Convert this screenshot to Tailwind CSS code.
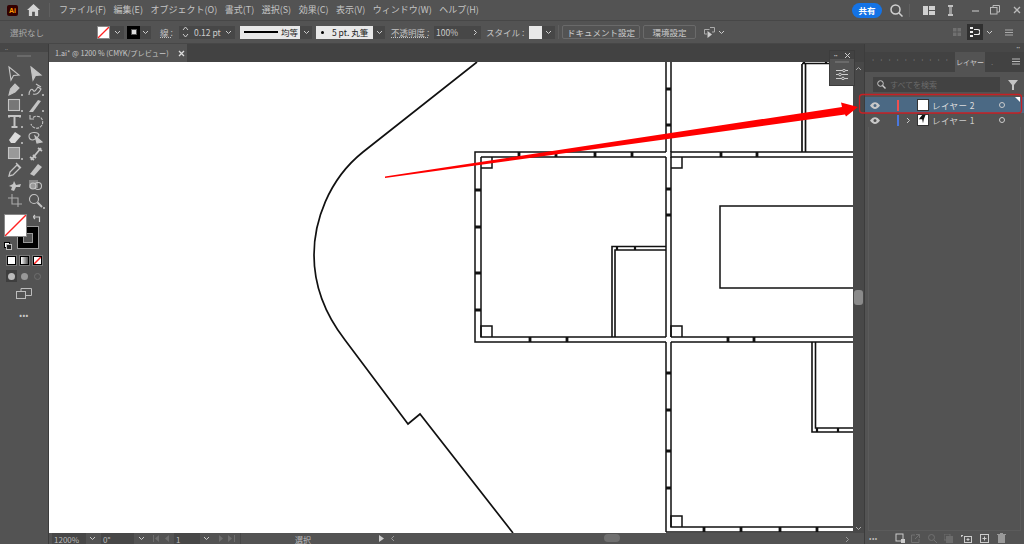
<!DOCTYPE html>
<html lang="ja"><head><meta charset="utf-8"><title>Illustrator</title>
<script src="https://cdn.jsdelivr.net/npm/@tailwindcss/browser@4"></script></head>
<body class="m-0 overflow-hidden">
<div class="w-[1024px] h-[544px] flex flex-col bg-[#535353] text-[#c4c4c4] overflow-hidden relative font-['Noto_Sans_CJK_JP','Noto_Sans',sans-serif]">

<!-- menu -->
<div class="h-[20px] flex items-center shrink-0 text-[9px]">
 <div class="w-[11px] h-[11px] ml-[7px] rounded-[2px] bg-[#330000] text-[#ff9a00] text-[7px] leading-[11px] text-center font-bold font-['Liberation_Sans']">Ai</div>
 <svg class="ml-[9px]" width="13" height="12" viewBox="0 0 14 13"><path d="M7 0L14 6.500H12V13H8.500V8.500H5.500V13H2V6.500H0Z" fill="#d4d4d4"/></svg>
 <div class="w-px h-[14px] bg-[#5f5f5f] ml-[9px]"></div>
 <div class="flex ml-[9px] gap-[7.500px] whitespace-nowrap">
  <span>ファイル(F)</span><span>編集(E)</span><span>オブジェクト(O)</span><span>書式(T)</span><span>選択(S)</span><span>効果(C)</span><span>表示(V)</span><span>ウィンドウ(W)</span><span>ヘルプ(H)</span>
 </div>
 <div class="flex-1"></div>
 <div class="w-[30px] h-[15px] rounded-full bg-[#1473e6] text-white text-[8.500px] leading-[15px] text-center font-bold mr-[8px]">共有</div>
 <svg class="mr-[6px]" width="13" height="13" viewBox="0 0 13 13" fill="none" stroke="#d0d0d0" stroke-width="1.500"><circle cx="5.500" cy="5.500" r="4.500"/><path d="M9 9l3.500 3.500"/></svg>
 <div class="w-px h-[13px] bg-[#5f5f5f] mr-[13px]"></div>
 <svg class="mr-[13px]" width="12" height="9" viewBox="0 0 12 9"><rect width="5" height="9" fill="#d0d0d0"/><rect x="6" width="6" height="4" fill="#d0d0d0"/><rect x="6" y="5" width="6" height="4" fill="#d0d0d0"/></svg>
 <svg class="mr-[18px]" width="5" height="11" viewBox="0 0 5 11"><rect width="5" height="2" fill="#c0c0c0"/><rect x="1" y="2" width="3" height="7" fill="#999"/><rect y="9" width="5" height="2" fill="#c0c0c0"/></svg>
 <svg class="mr-[10px]" width="9" height="9" viewBox="0 0 9 9"><path d="M1 5h7" stroke="#bbb" stroke-width="1.200"/></svg>
 <svg class="mr-[13px]" width="10" height="10" viewBox="0 0 10 10" fill="none" stroke="#bbb"><rect x="0.500" y="2.500" width="6.500" height="6.500"/><path d="M3 2.500V0.500H9.500V7H7"/></svg>
 <svg class="mr-[3px]" width="8" height="8" viewBox="0 0 8 8"><path d="M1 1l6 6M7 1l-6 6" stroke="#bbb" stroke-width="1.300"/></svg>
</div>

<!-- control bar -->
<div class="h-[24px] shrink-0 border-t border-b border-[#474747] flex items-center text-[8.500px] whitespace-nowrap">
 <span class="ml-[10px] w-[87px] text-[#aaa]">選択なし</span>
 <svg width="13" height="13" class="bg-white border border-[#888]" viewBox="0 0 13 13"><path d="M0 13L13 0" stroke="#f22" stroke-width="1.500"/></svg>
 <div class="w-[14px] h-[13px] bg-[#474747] flex items-center justify-center"><svg width="7" height="5" viewBox="0 0 7 5" fill="none" stroke="#ccc"><path d="M1 1l2.500 2.500L6 1"/></svg></div>
 <div class="ml-[3px] w-[13px] h-[13px] bg-black flex items-center justify-center"><div class="w-[6px] h-[6px] bg-[#ddd] border border-[#555]"></div></div>
 <div class="w-[11px] h-[13px] bg-[#474747] flex items-center justify-center"><svg width="7" height="5" viewBox="0 0 7 5" fill="none" stroke="#ccc"><path d="M1 1l2.500 2.500L6 1"/></svg></div>
 <span class="ml-[9px] w-[15px] underline decoration-dotted">線 :</span>
 <div class="ml-[4px] h-[13px] w-[56px] bg-[#474747] flex items-center text-[#ccc]">
  <svg class="ml-[3px]" width="7" height="12" viewBox="0 0 7 12" fill="none" stroke="#ccc"><path d="M1 4l2.500-3L6 4M1 8l2.500 3L6 8"/></svg>
  <span class="ml-[5px]">0.12 pt</span><svg class="ml-auto mr-[3px]" width="7" height="5" viewBox="0 0 7 5" fill="none" stroke="#ccc"><path d="M1 1l2.500 2.500L6 1"/></svg>
 </div>
 <div class="ml-[5px] h-[13px] w-[60px] bg-[#e8e8e8] flex items-center text-[#222]"><div class="ml-[4px] w-[34px] h-[2px] bg-black"></div><span class="ml-[3px]">均等</span></div>
 <div class="w-[12px] h-[13px] bg-[#474747] flex items-center justify-center"><svg width="7" height="5" viewBox="0 0 7 5" fill="none" stroke="#ccc"><path d="M1 1l2.500 2.500L6 1"/></svg></div>
 <div class="ml-[4px] h-[13px] w-[57px] bg-[#e8e8e8] flex items-center text-[#222]"><div class="ml-[5px] w-[3px] h-[3px] rounded-full bg-black"></div><span class="ml-[8px]">5 pt. 丸筆</span></div>
 <div class="w-[12px] h-[13px] bg-[#474747] flex items-center justify-center"><svg width="7" height="5" viewBox="0 0 7 5" fill="none" stroke="#ccc"><path d="M1 1l2.500 2.500L6 1"/></svg></div>
 <span class="ml-[6px] w-[38px] underline decoration-dotted">不透明度 :</span>
 <div class="ml-[5px] h-[13px] w-[36px] bg-[#474747] pl-[2px] leading-[13px] text-[#ccc]">100%</div>
 <div class="w-[11px] h-[13px] bg-[#474747] flex items-center justify-center"><svg width="5" height="7" viewBox="0 0 5 7" fill="none" stroke="#ccc"><path d="M1 1l2.500 2.500L1 6"/></svg></div>
 <span class="ml-[5px] w-[39px]">スタイル :</span>
 <div class="ml-[4px] w-[13px] h-[13px] bg-[#e8e8e8]"></div>
 <div class="w-[13px] h-[13px] bg-[#474747] flex items-center justify-center"><svg width="7" height="5" viewBox="0 0 7 5" fill="none" stroke="#ccc"><path d="M1 1l2.500 2.500L6 1"/></svg></div>
 <div class="ml-[3px] w-px h-[14px] bg-[#5f5f5f]"></div>
 <div class="ml-[3px] w-[78px] h-[14px] border border-[#6a6a6a] rounded-[2px] text-center leading-[12px] text-[#ccc]">ドキュメント設定</div>
 <div class="ml-[3px] w-[53px] h-[14px] border border-[#6a6a6a] rounded-[2px] text-center leading-[12px] text-[#ccc]">環境設定</div>
 <svg class="ml-[8px]" width="11" height="11" viewBox="0 0 11 11" fill="none" stroke="#aaa"><path d="M5.500 2.500H0.500V7H3M6 0.500H10.500V5H8"/><path d="M3.500 4V11L8 7.500Z" fill="#ccc" stroke="none"/></svg>
 <svg class="ml-[3px]" width="7" height="5" viewBox="0 0 7 5" fill="none" stroke="#ccc"><path d="M1 1l2.500 2.500L6 1"/></svg>
 <div class="flex-1"></div>
 <svg width="8" height="8" viewBox="0 0 8 8" fill="#707070"><rect width="3.500" height="3.500"/><rect x="4.500" width="3.500" height="3.500"/><rect y="4.500" width="3.500" height="3.500"/><rect x="4.500" y="4.500" width="3.500" height="3.500"/></svg>
 <div class="ml-[6px] w-[16px] h-[16px] bg-[#303030] flex items-center justify-center"><svg width="10" height="10" viewBox="0 0 10 10" fill="#eee"><rect width="3" height="2"/><rect y="4" width="3" height="2"/><rect y="8" width="3" height="2"/><path d="M4 2.500h3.500a2 2 0 0 1 0 5H4" fill="none" stroke="#eee" stroke-width="1.200"/></svg></div>
 <svg class="ml-[3px]" width="7" height="5" viewBox="0 0 7 5" fill="none" stroke="#ccc"><path d="M1 1l2.500 2.500L6 1"/></svg>
 <svg class="ml-[12px] mr-[11px]" width="8" height="7" viewBox="0 0 8 7" stroke="#aaa"><path d="M0 1h8M0 3.500h8M0 6h8"/></svg>
</div>

<!-- body -->
<div class="flex-1 flex min-h-0">
 <!-- tools -->
 <div class="w-[49px] shrink-0 border-r border-[#3c3c3c] flex flex-col items-center">
  <div class="h-[8px] w-full bg-[#474747] flex items-center pl-[5px] text-[5px] text-[#aaa]">..</div>
  <div class="w-[28px] h-[8px] flex items-center justify-center"><div class="w-[14px] h-[2px] bg-[#6a6a6a]"></div></div>
  <svg class="mt-[5px]" width="48" height="149" viewBox="0 0 48 149" fill="none" stroke="#c4c4c4" stroke-width="1.100">
   <path d="M9 2L19 10L13.500 10.500L11 15Z"/><path d="M31 2L41 10L35.500 10.500L33 15Z" fill="#c4c4c4"/>
   <g transform="translate(0 16)"><path d="M9 14L10.500 8L15 3L19 7L15 11Z" fill="#c4c4c4"/><path d="M29 14C29 9 32 7 33 9C34 12 36 9 38 6L41 8C39 12 36 14 33 13" /><path d="M36 3L41 6"/><rect x="21" y="13" width="2" height="2" fill="#aaa" stroke="none"/><rect x="42" y="13" width="2" height="2" fill="#aaa" stroke="none"/></g>
   <g transform="translate(0 32)"><rect x="8.500" y="2.500" width="11" height="11" fill="#777"/><path d="M29 15L38 3L41 4L33 15Z" fill="#c4c4c4" stroke="none"/><rect x="21" y="13" width="2" height="2" fill="#aaa" stroke="none"/><rect x="42" y="13" width="2" height="2" fill="#aaa" stroke="none"/></g>
   <g transform="translate(0 48)"><path d="M9 4.500V3H20V4.500M14.500 3V14M11.500 14H17.500" stroke-width="2"/><path d="M33 4.500A6 6 0 1 1 31 11" stroke-dasharray="3 1"/><path d="M30 2V6H34"/><rect x="21" y="13" width="2" height="2" fill="#aaa" stroke="none"/></g>
   <g transform="translate(0 64)"><path d="M9 11L15 3L21 7L15 14H11Z" fill="#dcdcdc" stroke="none"/><path d="M29 7C29 3 38 2 39 6L37 9L33 11C30 11 29 9 29 7Z"/><path d="M35 7L42 13L37 14Z" fill="#c4c4c4"/><rect x="21" y="13" width="2" height="2" fill="#aaa" stroke="none"/></g>
   <g transform="translate(0 80)"><rect x="8.500" y="2.500" width="11" height="11" fill="#999"/><path d="M31 15L41 3M30 12L34 15M38 3L42 6M33 10L36 13" stroke-width="1.800"/><rect x="21" y="13" width="2" height="2" fill="#aaa" stroke="none"/></g>
   <g transform="translate(0 96)"><path d="M9 15L10 11L17 4L20 7L13 14ZM16 2L21 7" stroke-width="1.300"/><path d="M30 13L38 3L42 6L34 15Z" fill="#c4c4c4" stroke="none"/></g>
   <g transform="translate(0 112)"><path d="M9 9L13 7L14 4L16 8L21 7L20 10L16 10L14 14L11 13L12 10Z" fill="#c4c4c4" stroke="none"/><rect x="29" y="3" width="9" height="8" fill="#888" stroke="none"/><circle cx="38" cy="9" r="3.500"/><circle cx="33" cy="9" r="3" fill="#999"/></g>
   <g transform="translate(0 128)"><path d="M8 5H18V14M12 1V11H22" stroke="#aaa"/><circle cx="34" cy="6" r="4.500"/><path d="M37.500 9.500L42 14" stroke-width="2"/><rect x="43" y="14" width="2" height="2" fill="#aaa" stroke="none"/></g>
  </svg>
  <!-- fill/stroke -->
  <div class="relative w-[40px] h-[40px]">
   <div class="absolute left-[13px] top-[12px] w-[22px] h-[23px] bg-black border border-[#999] flex items-center justify-center"><div class="w-[10px] h-[10px] bg-[#535353] border border-[#999]"></div></div>
   <svg class="absolute left-[0px] top-[0px] bg-white border border-[#888]" width="23" height="23" viewBox="0 0 23 23"><path d="M0 23L23 0" stroke="#f22" stroke-width="1.500"/></svg>
   <svg class="absolute left-[29px] top-[0px]" width="9" height="9" viewBox="0 0 9 9" fill="none" stroke="#ccc" stroke-width="1.200"><path d="M1 3H6.500V8M0 3l2-2M0 3l2 2"/></svg>
   <div class="absolute left-[0px] top-[28px] w-[6px] h-[6px] bg-white border border-black"></div><div class="absolute left-[2px] top-[30px] w-[6px] h-[6px] bg-[#222] border border-[#bbb]"></div>
  </div>
  <div class="flex gap-[4px] mt-[2px]">
   <div class="w-[9px] h-[9px] bg-white border border-black outline outline-[#777]"></div>
   <div class="w-[9px] h-[9px] bg-gradient-to-r from-white to-[#555] border border-black outline outline-[#777]"></div>
   <svg class="border border-black outline outline-[#777] bg-white" width="9" height="9" viewBox="0 0 9 9"><path d="M0 9L9 0" stroke="#f22" stroke-width="2"/></svg>
  </div>
  <div class="flex gap-[2px] mt-[5px]">
   <div class="w-[11px] h-[12px] bg-[#3e3e3e] flex items-center justify-center"><div class="w-[7px] h-[7px] rounded-full bg-[#bbb]"></div></div>
   <div class="w-[11px] h-[12px] flex items-center justify-center"><div class="w-[7px] h-[7px] rounded-full bg-[#999]"></div></div>
   <div class="w-[11px] h-[12px] flex items-center justify-center"><div class="w-[7px] h-[7px] rounded-full border border-[#6e6e6e]"></div></div>
  </div>
  <svg class="mt-[6px]" width="16" height="11" viewBox="0 0 16 11" fill="none" stroke="#bdbdbd"><rect x="0.500" y="3.500" width="9" height="7"/><path d="M5 3.500V0.500H15.500V7.500H9.500"/></svg>
  <div class="mt-[11px] text-[#ccc] text-[8px] leading-[10px] tracking-[0.5px]">•••</div>
 </div>

 <!-- doc -->
 <div class="w-[815px] shrink-0 flex flex-col relative">
  <div class="h-[18px] bg-[#424242] flex shrink-0">
   <div class="w-[138px] h-[18px] bg-[#535353] flex items-center pl-[6px] text-[7.200px] text-[#c8c8c8] whitespace-nowrap">1.ai* @ 1200 % (CMYK/プレビュー)<svg class="ml-[9px]" width="7" height="7" viewBox="0 0 7 7"><path d="M1 1l5 5M6 1l-5 5" stroke="#ddd" stroke-width="1.300"/></svg></div>
  </div>
  <div class="flex-1 flex min-h-0">
   <!-- artboard -->
   <svg class="bg-white shrink-0" width="804" height="471" viewBox="49 62 804 471" fill="none" stroke="#111" stroke-width="1.500">
    <path d="M477 62L363 152C328 180 314 222 314 255C314 290 328 318 345 340L408 424L420 414L513 533" stroke-width="1.700"/>
    <path d="M666 62V152M671 62V152"/>
    <path d="M802 64V152M805.500 64V152" stroke-width="1.700"/>
    <path d="M802 63.500H830" />
    <path d="M853 152H671V157H853"/>
    <path d="M666 152H475V342H666M481 157H666M481 157V337H666"/>
    <path d="M666 157V337M671 157V337M671 337H853M671 342H853"/>
    <path d="M666 342V532M671 342V527H853M666 532H853"/>
    <path d="M481 168H492V157M671 168H682V157M481 337V326H492V337M671 337V326H682V337M671 527V516H682V527"/>
    <rect x="720" y="206" width="140" height="82"/>
    <g stroke-width="1.600"><path d="M612 337V246.500H666M615 337V250H666"/><path d="M812 342V432H853M815.500 342V428H853"/></g>
    <g stroke-width="2.800">
     <path d="M519 152V157M556 152V157M595 152V157M632 152V157"/>
     <path d="M475 190H481M475 227H481M475 273H481M475 310H481"/>
     <path d="M530 337V342M567 337V342M728 337V342M754 337V342"/>
     <path d="M666 89H671M666 125H671M666 189H671M666 215H671M666 373H671M666 410H671M666 451H671M666 488H671"/>
     <path d="M704 527V532M741 527V532M780 527V532M817 527V532"/>
     <path d="M721 152V157M757 152V157"/>
    </g>
    <g stroke-width="2.200"><path d="M817 428V432M838 428V432M617 246.500V250M635 246.500V250M804 62V64M826 62V64"/></g>
   </svg>
   <!-- scrollbar -->
   <div class="w-[11px] shrink-0 bg-[#484848] relative">
    <svg class="absolute left-[2px] top-[4px]" width="7" height="5" viewBox="0 0 7 5" fill="none" stroke="#aaa"><path d="M1 4l2.500-2.500L6 4"/></svg>
    <div class="absolute left-[1px] top-[228px] w-[9px] h-[15px] rounded-[3px] bg-[#8a8a8a]"></div>
    <svg class="absolute left-[2px] top-[464px]" width="7" height="5" viewBox="0 0 7 5" fill="none" stroke="#aaa"><path d="M1 1l2.500 2.500L6 1"/></svg>
   </div>
  </div>
  <!-- status -->
  <div class="h-[11px] shrink-0 flex items-start text-[8px] leading-[14px] text-[#bbb] overflow-hidden whitespace-nowrap bg-[#535353] pl-[3px]">
   <div class="w-[34px] h-[11px] bg-[#474747] pl-[2px]">1200%</div><div class="w-[11px] h-[11px] ml-px flex justify-center items-center"><svg width="7" height="5" viewBox="0 0 7 5" fill="none" stroke="#ccc"><path d="M1 1l2.500 2.500L6 1"/></svg></div>
   <div class="ml-[3px] w-[33px] h-[11px] bg-[#474747] pl-[2px]">0°</div><div class="w-[14px] h-[11px] flex justify-center items-center"><svg width="7" height="5" viewBox="0 0 7 5" fill="none" stroke="#ccc"><path d="M1 1l2.500 2.500L6 1"/></svg></div>
   <svg class="ml-[5px] mt-[2px]" width="18" height="7" viewBox="0 0 18 7" fill="#6e6e6e"><rect width="1" height="7"/><path d="M6 0v7L2 3.500ZM16 0v7L12 3.500Z"/></svg>
   <div class="ml-[3px] w-[26px] h-[11px] bg-[#474747] pl-[2px]">1</div><div class="w-[12px] h-[11px] flex justify-center items-center"><svg width="7" height="5" viewBox="0 0 7 5" fill="none" stroke="#ccc"><path d="M1 1l2.500 2.500L6 1"/></svg></div>
   <svg class="ml-[7px] mt-[2px]" width="18" height="7" viewBox="0 0 18 7" fill="#6e6e6e"><path d="M0 0v7L4 3.500ZM9 0v7L13 3.500Z"/><rect x="15" width="1" height="7"/></svg>
   <div class="ml-[3px] w-[133px] text-center text-[8px] border-l border-[#474747] pr-[8px]">選択</div>
   <svg class="ml-[6px] mt-[2px]" width="5" height="7" viewBox="0 0 5 7" fill="#ccc"><path d="M0 0v7L5 3.500Z"/></svg>
   <svg class="ml-[6px] mt-[2px]" width="5" height="7" viewBox="0 0 5 7" fill="none" stroke="#999"><path d="M4 1L1.500 3.500L4 6"/></svg>
   <div class="absolute left-[555px] bottom-[2px] w-[16px] h-[8px] rounded bg-[#707070]"></div>
   <svg class="absolute right-[14px] bottom-[1px]" width="5" height="7" viewBox="0 0 5 7" fill="none" stroke="#999"><path d="M1 1l2.500 2.500L1 6"/></svg>
  </div>
 </div>

 <!-- right panels -->
 <div class="w-[160px] shrink-0 border-l border-[#3c3c3c] flex flex-col">
  <div class="h-[8px] bg-[#474747] shrink-0 flex justify-end pr-[4px] text-[5px] leading-[6px] text-[#aaa]">••</div>
  <div class="h-[20px] bg-[#424242] shrink-0 flex items-stretch">
   <div class="w-[90px] flex items-center justify-around px-[4px] text-[#7a7a7a] text-[7px]"><span>ˈ</span><span>ˈ</span><span>ˈ</span><span>ˈ</span><span>ˈ</span><span>ˈ</span><span>ˈ</span><span>ˈ</span><span>ˈ</span><span>ˈ</span></div>
   <div class="w-[30px] bg-[#535353] text-[7px] leading-[20px] text-center text-[#ccc]">レイヤー</div>
   <span class="ml-[6px] text-[#777] text-[8px] leading-[20px]">.</span>
   <svg class="ml-auto mr-[4px] mt-[6px]" width="8" height="7" viewBox="0 0 8 7" stroke="#bbb"><path d="M0 1h8M0 3.500h8M0 6h8"/></svg>
  </div>
  <div class="flex items-center mt-[5px] ml-[8px] shrink-0">
   <div class="w-[127px] h-[15px] bg-[#424242] flex items-center pl-[4px] text-[8px] text-[#6a6a6a]"><svg width="9" height="9" viewBox="0 0 9 9" fill="none" stroke="#ccc"><circle cx="3.500" cy="3.500" r="2.800"/><path d="M5.500 5.500L8.500 8.500" stroke-width="1.400"/></svg><span class="ml-[4px]">すべてを検索</span></div>
   <svg class="ml-[8px]" width="10" height="10" viewBox="0 0 10 10" fill="#c4c4c4"><path d="M0 0H10L6 5V10H4V5Z"/></svg>
  </div>
  <div class="mt-[5px] h-[16px] bg-[#4b6984] shrink-0 flex items-center relative text-[8.500px] text-[#ddd]">
   <svg class="ml-[5px]" width="10" height="7" viewBox="0 0 10 7"><path d="M0 3.500C3 -1 7 -1 10 3.500C7 8 3 8 0 3.500Z" fill="#c8c8c8"/><circle cx="5" cy="3.500" r="1.500" fill="#4b6984"/></svg>
   <div class="ml-[17px] w-[2px] h-[11px] bg-[#f05050]"></div>
   <div class="ml-[18px] w-[12px] h-[12px] bg-white border border-[#333]"></div>
   <span class="ml-[3px] tracking-[0.4px]">レイヤー 2</span>
   <div class="absolute left-[134px] top-[5px] w-[6px] h-[6px] rounded-full border border-[#ccc]"></div>
   <div class="absolute right-[4px] top-0 w-0 h-0 border-t-[5px] border-l-[5px] border-t-white border-l-transparent"></div>
  </div>
  <div class="h-[14px] shrink-0 flex items-center relative text-[8.500px] text-[#ccc]">
   <svg class="ml-[5px]" width="10" height="7" viewBox="0 0 10 7"><path d="M0 3.500C3 -1 7 -1 10 3.500C7 8 3 8 0 3.500Z" fill="#c8c8c8"/><circle cx="5" cy="3.500" r="1.500" fill="#535353"/></svg>
   <div class="ml-[17px] w-[2px] h-[11px] bg-[#4a78e0]"></div>
   <svg class="ml-[7px]" width="5" height="7" viewBox="0 0 5 7" fill="none" stroke="#ccc"><path d="M1 1l2.500 2.500L1 6"/></svg>
   <svg class="ml-[6px] bg-white border border-[#333]" width="12" height="12" viewBox="0 0 12 12"><path d="M1 5L5 0H9L7 5L6 10L5 5Z" fill="#111"/></svg>
   <span class="ml-[3px] tracking-[0.4px]">レイヤー 1</span>
   <div class="absolute left-[134px] top-[4px] w-[6px] h-[6px] rounded-full border border-[#ccc]"></div>
  </div>
  <div class="flex-1 mx-[3px] mb-[1px] border border-[#5b5b5b] border-t-0"></div>
  <div class="h-[12px] shrink-0 flex items-center pl-[4px] text-[#bbb]">
   <span class="w-[12px] text-[7px] tracking-[0.5px] leading-[12px] overflow-hidden">•••</span>
   <svg class="ml-[14px]" width="10" height="10" viewBox="0 0 10 10" fill="none" stroke="#ccc"><rect x="1" y="1" width="7" height="7"/><rect x="6" y="6" width="4" height="4" fill="#ccc" stroke="none"/></svg>
   <svg class="ml-[6px]" width="9" height="9" viewBox="0 0 9 9" fill="none" stroke="#707070"><path d="M4 1H0.500V8.500H8V5M5 0.500H8.500V4M8.500 0.500L4 5"/></svg>
   <svg class="ml-[8px]" width="9" height="9" viewBox="0 0 9 9" fill="none" stroke="#707070"><circle cx="3.500" cy="3.500" r="3"/><path d="M6 6l3 3"/></svg>
   <svg class="ml-[7px]" width="9" height="9" viewBox="0 0 9 9" fill="#6c6c6c"><rect x="2" y="2" width="7" height="7"/><rect width="6" height="6" fill="none" stroke="#6c6c6c"/></svg>
   <svg class="ml-[8px]" width="11" height="9" viewBox="0 0 11 9" fill="none" stroke="#ccc"><rect x="3.500" y="2.500" width="7" height="6"/><path d="M0 1.500H2M0 1.500L1 3M7 4v3M5.500 5.500h3"/></svg>
   <svg class="ml-[8px]" width="9" height="9" viewBox="0 0 9 9" fill="none" stroke="#ccc"><rect x="0.500" y="0.500" width="8" height="8"/><path d="M4.500 2.500v4M2.500 4.500h4"/></svg>
   <svg class="ml-[8px]" width="9" height="10" viewBox="0 0 9 10" fill="#999"><rect x="1" y="2" width="7" height="8"/><rect y="1" width="9" height="1"/><rect x="3" width="3" height="1"/></svg>
  </div>
 </div>
</div>

<!-- floating mini panel -->
<div class="absolute left-[829px] top-[50px] w-[26px] h-[36px] bg-[#535353] border border-[#3c3c3c]">
 <div class="h-[8px] bg-[#424242] flex justify-between items-center px-[4px] text-[5px] text-[#bbb]"><span>••</span><svg width="5" height="5" viewBox="0 0 5 5"><path d="M0 0l5 5M5 0L0 5" stroke="#ccc"/></svg></div>
 <div class="w-[14px] h-[2px] bg-[#6a6a6a] mx-auto mt-[2px]"></div>
 <div class="flex justify-center mt-[6px]"><svg width="12" height="11" viewBox="0 0 12 11" stroke="#ccc" fill="#535353"><path d="M0 1.500h12M0 5.500h12M0 9.500h12"/><circle cx="8" cy="1.500" r="1.300"/><circle cx="4" cy="5.500" r="1.300"/><circle cx="7" cy="9.500" r="1.300"/></svg></div>
</div>

<!-- red annotation, over everything -->
<svg class="absolute left-0 top-0 pointer-events-none" width="1024" height="544" viewBox="0 0 1024 544" fill="none">
 <path d="M385 176.500L842 107L841 102.500L858 107L846 116.500L845 114.500L385 178Z" fill="#ff0000"/>
 <rect x="859.500" y="94.500" width="162" height="18.500" rx="3" stroke="#c82024" stroke-width="1.300"/>
</svg>
</div>
</body></html>
